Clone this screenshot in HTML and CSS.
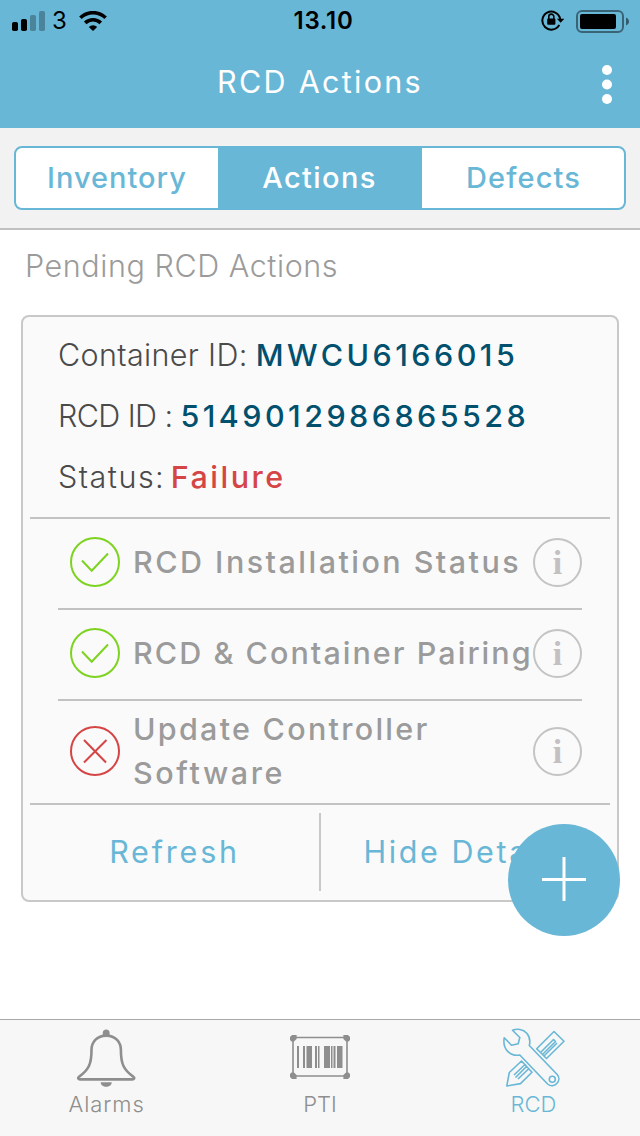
FILE: index.html
```html
<!DOCTYPE html>
<html lang="en">
<head>
<meta charset="utf-8">
<title>RCD Actions</title>
<link rel="stylesheet" href="styles.css">
</head>
<body>
<div class="screen">
  <header class="header">
    <div class="status-bar">
      <div class="status-left">
        <svg class="signal" viewBox="0 0 33 20" width="33" height="20">
          <rect x="0" y="11" width="6" height="9" rx="1.8"/>
          <rect x="9" y="8" width="6" height="12" rx="1.8"/>
          <rect class="dim" x="18" y="4" width="6" height="16" rx="1.8"/>
          <rect class="dim" x="27" y="0" width="6" height="20" rx="1.8"/>
        </svg>
        <span class="carrier">3</span>
        <svg class="wifi" viewBox="0 0 28 20" width="28" height="20">
          <path class="arc" d="M1.4 6.8A18 18 0 0 1 26.6 6.8"/>
          <path class="arc" d="M6.2 11.9A11.2 11.2 0 0 1 21.8 11.9"/>
          <path d="M14 20L9.8 15.9A6 6 0 0 1 18.2 15.9Z"/>
        </svg>
      </div>
      <span class="clock">13.10</span>
      <div class="status-right">
        <svg class="lock" viewBox="0 0 24 22" width="24" height="22">
          <path class="ring" d="M18.3 14.9A9 9 0 1 1 19.2 9"/>
          <path d="M15.9 8.8H23.4L19.6 12.8Z"/>
          <rect x="6.2" y="8.6" width="8.2" height="6.2" rx="1"/>
          <path class="shackle" d="M7.8 9V6.6A2.5 2.5 0 0 1 12.8 6.6V9"/>
        </svg>
        <svg class="battery" viewBox="0 0 54 24" width="54" height="24">
          <rect class="shell" x="1" y="2" width="46" height="21" rx="5"/>
          <rect x="4" y="5" width="36" height="15" rx="2"/>
          <path class="cap" d="M50 8.5C54 10 54 15 50 16.5Z"/>
        </svg>
      </div>
    </div>
    <div class="title-bar">
      <h1 class="title">RCD Actions</h1>
      <svg class="menu" viewBox="0 0 10 40" width="10" height="40">
        <circle cx="5" cy="6" r="5"/><circle cx="5" cy="20.5" r="5"/><circle cx="5" cy="35" r="5"/>
      </svg>
    </div>
  </header>

  <nav class="segments">
    <div class="segment-group">
      <span class="segment inventory">Inventory</span>
      <span class="segment active">Actions</span>
      <span class="segment defects">Defects</span>
    </div>
  </nav>

  <main class="content">
    <h2 class="heading">Pending RCD Actions</h2>
    <section class="card">
      <div class="details">
        <div class="detail"><span class="label container-label">Container ID:</span><span class="value">MWCU6166015</span></div>
        <div class="detail"><span class="label rcd-label">RCD ID :</span><span class="value">5149012986865528</span></div>
        <div class="detail"><span class="label status-label">Status:</span><span class="value failure">Failure</span></div>
      </div>
      <ul class="checks">
        <li class="check">
          <svg class="state ok" viewBox="0 0 50 50" width="50" height="50"><circle cx="25" cy="25" r="24"/><path d="M12 23.5L21.7 33.8L38 16.5"/></svg>
          <span class="check-name install">RCD Installation Status</span>
          <span class="info">i</span>
        </li>
        <li class="check">
          <svg class="state ok" viewBox="0 0 50 50" width="50" height="50"><circle cx="25" cy="25" r="24"/><path d="M12 23.5L21.7 33.8L38 16.5"/></svg>
          <span class="check-name pairing">RCD &amp; Container Pairing</span>
          <span class="info">i</span>
        </li>
        <li class="check">
          <svg class="state bad" viewBox="0 0 50 50" width="50" height="50"><circle cx="25" cy="25" r="24"/><path d="M14 14L36 36.5M36.5 14L14 36.5"/></svg>
          <span class="check-name"><span class="update">Update Controller</span><br><span class="software">Software</span></span>
          <span class="info">i</span>
        </li>
      </ul>
      <div class="card-actions">
        <span class="card-action">Refresh</span>
        <span class="separator"></span>
        <span class="card-action hide">Hide Details</span>
      </div>
    </section>
    <div class="fab"><svg viewBox="0 0 44 44" width="44" height="44"><path d="M22 -1V43M0 21.5H44"/></svg></div>
  </main>

  <footer class="tabs">
    <div class="tab">
      <svg viewBox="0 0 64 60" width="64" height="60">
        <g transform="translate(-.8 0)">
          <path class="fill" d="M28.6 9V4.6C28.6 .4 35.4 .4 35.4 4.6V9Z"/>
          <path class="line thick" d="M32 7.6C22.5 7.6 17.3 14.5 17.3 22C17.3 36 14.5 42 5 48.6C3 50 4 51.4 6 51.4H58C60 51.4 61 50 59 48.6C49.5 42 46.7 36 46.7 22C46.7 14.5 41.5 7.6 32 7.6Z"/>
          <path class="fill" d="M26.5 54.2H37.5C37.5 60.2 26.5 60.2 26.5 54.2Z"/>
        </g>
      </svg>
      <span class="tab-name alarms">Alarms</span>
    </div>
    <div class="tab">
      <svg viewBox="0 0 64 60" width="64" height="60">
        <rect class="line" x="5" y="9.5" width="54" height="38.5"/>
        <g class="fill">
          <path d="M4 7H8.6V11L6 13.5H3.5L2 12V9ZM60 7H55.4V11L58 13.5H60.5L62 12V9ZM4 51H8.6V47L6 44.5H3.5L2 46V49ZM60 51H55.4V47L58 44.5H60.5L62 46V49Z"/>
          <rect x="9" y="18" width="2" height="22"/><rect x="15" y="18" width="2" height="22"/><rect x="18.5" y="18" width="5.5" height="22"/><rect x="27" y="18" width="2" height="22"/><rect x="30" y="18" width="1.5" height="22"/><rect x="36" y="18" width="6" height="22"/><rect x="43" y="18" width="1.5" height="22"/><rect x="45.5" y="18" width="2" height="22"/><rect x="49" y="18" width="5.5" height="22"/>
        </g>
      </svg>
      <span class="tab-name">PTI</span>
    </div>
    <div class="tab current">
      <svg viewBox="0 0 64 60" width="64" height="60">
        <path class="line" d="M11.5 2.3C16 .5 22 1 25.8 5.2C29 9 29.3 13.5 28.3 17.5L56.2 46.5C61.5 52.5 53 61.5 46.6 56L18.8 27C10 28.7 1.2 22 3.2 9.8L10.5 17.2L17.2 15.8L18.8 9.5Z"/>
        <circle class="line" cx="51.3" cy="51.3" r="3"/>
        <path class="line" d="M35.7 20.7L53 3.5L63 13.2L45.5 30.5ZM39.5 24.5L52.5 11.5L54.5 13.5L41.5 26.5M43 28L56 15"/>
        <path class="line" d="M20.5 33L8.3 44.5L5.8 58L19.5 55.6L31 44.2ZM13 47L24 36.5L25.5 38.5L14.5 49.5M17 51L28 40.5"/>
      </svg>
      <span class="tab-name">RCD</span>
    </div>
  </footer>
</div>
</body>
</html>
```

FILE: styles.css
```css
* { box-sizing: border-box; }
body { margin: 0; font-family: Inter, "Liberation Sans", sans-serif; background: #fff; }
h1, h2, ul { margin: 0; padding: 0; list-style: none; font-weight: 400; }
svg { display: block; flex: none; }
.screen { width: 640px; height: 1136px; display: flex; flex-direction: column; overflow: hidden; }

.header { height: 128px; background: #69b7d6; }
.status-bar { height: 40px; padding: 0 10px 0 12px; display: grid; grid-template-columns: 1fr auto 1fr; align-items: center; }
.status-left, .status-right { display: flex; align-items: center; }
.status-right { justify-content: flex-end; gap: 11px; }
.signal .dim { opacity: .28; }
.carrier { margin-left: 7px; width: 27px; font-size: 24px; line-height: 42px; }
.wifi .arc { fill: none; stroke: #000; stroke-width: 3.6; }
.clock { padding-left: 5px; font-size: 24px; font-weight: 600; line-height: 42px; letter-spacing: .7px; }
.ring, .shackle { fill: none; stroke: #000; stroke-width: 2; }
.shackle { stroke-width: 1.6; }
.shell { fill: none; stroke: #000; stroke-opacity: .45; stroke-width: 2; }
.cap { opacity: .5; }
.title-bar { height: 88px; padding: 0 28px; display: grid; grid-template-columns: 10px 1fr 10px; }
.title { grid-column: 2; text-align: center; color: #fff; font-size: 30.5px; line-height: 84px; letter-spacing: 2.3px; }
.menu { align-self: center; fill: #fff; }

.segments { height: 102px; padding: 18px 14px; background: #f2f2f2; border-bottom: 2px solid #c0c0c0; }
.segment-group { height: 64px; display: grid; grid-template-columns: 202px 204px 202px; border: 2px solid #69b7d6; border-radius: 8px; background: #fff; overflow: hidden; }
.segment { text-align: center; color: #69b7d6; font-size: 29px; font-weight: 500; line-height: 60px; letter-spacing: 1px; }
.segment.active { padding-right: 1px; background: #69b7d6; color: #fff; letter-spacing: 1.4px; }
.segment.defects { padding-left: 1px; letter-spacing: 1.1px; }

.content { position: relative; flex: 1; padding: 0 21px; }
.heading { height: 85px; padding-left: 4px; font-size: 30.5px; font-weight: 300; line-height: 72px; letter-spacing: .56px; color: #9b9b9b; }
.card { height: 587px; border: 2px solid #c8c8c8; border-radius: 8px; background: #fafafa; padding: 0 7px; }
.details { height: 202px; padding: 7px 28px; border-bottom: 2px solid #c2c2c2; }
.detail { display: flex; gap: 8px; height: 61px; line-height: 61px; font-size: 30.5px; white-space: nowrap; }
.label { font-weight: 300; color: #4a4a4a; }
.container-label { letter-spacing: .35px; }
.rcd-label { letter-spacing: -.6px; }
.status-label { margin-right: -2.5px; letter-spacing: 1.5px; }
.value { font-weight: 500; color: #00506e; letter-spacing: 3.45px; }
.value.failure { color: #d54545; letter-spacing: 2.5px; }
.checks { height: 286px; padding: 0 28px; border-bottom: 2px solid #c2c2c2; }
.check { height: 91px; padding: 0 0 3px 12px; display: flex; align-items: center; border-bottom: 2px solid #c2c2c2; }
.check:last-child { height: 102px; padding-bottom: 2px; border: 0; }
.state { fill: none; stroke-width: 2; }
.ok { stroke: #7ed321; }
.bad { stroke: #d54545; }
.check-name { flex: 1; padding-left: 13px; min-width: 0; font-size: 30.5px; font-weight: 500; line-height: 44px; color: #9b9b9b; white-space: nowrap; }
.install { letter-spacing: 2.46px; }
.pairing { letter-spacing: 2.04px; }
.update { letter-spacing: 2.27px; }
.software { letter-spacing: 2.6px; }
.info { flex: none; width: 49px; height: 49px; border: 2px solid #c4c4c4; border-radius: 50%; text-align: center; font: 700 34px/45px "Liberation Serif", serif; color: #c4c0c2; }
.card-actions { height: 93px; display: flex; align-items: center; }
.card-action { flex: 1; text-align: center; font-size: 30.5px; line-height: 93px; letter-spacing: 2.8px; color: #69b7d6; white-space: nowrap; }
.card-action.hide { letter-spacing: 2.6px; }
.separator { width: 2px; height: 78px; background: #c8c8c8; }
.fab { position: absolute; left: 508px; top: 594px; width: 112px; height: 112px; border-radius: 50%; background: #69b7d6; display: flex; align-items: center; justify-content: center; }
.fab svg { overflow: visible; }
.fab path { stroke: #fff; stroke-width: 3; }

.tabs { height: 117px; border-top: 1px solid #a8a8a8; background: #f7f7f7; display: grid; grid-template-columns: 1fr 1fr 1fr; color: #8e8e8e; }
.tab { padding-top: 8px; display: flex; flex-direction: column; align-items: center; }
.tab.current { color: #69b7d6; }
.line { fill: none; stroke: currentColor; stroke-width: 1.6; stroke-linejoin: round; }
.line.thick { stroke-width: 2.6; }
.fill { fill: currentColor; }
.tab-name { font-size: 22px; font-weight: 300; line-height: 32px; }
.alarms { letter-spacing: .9px; }
```
